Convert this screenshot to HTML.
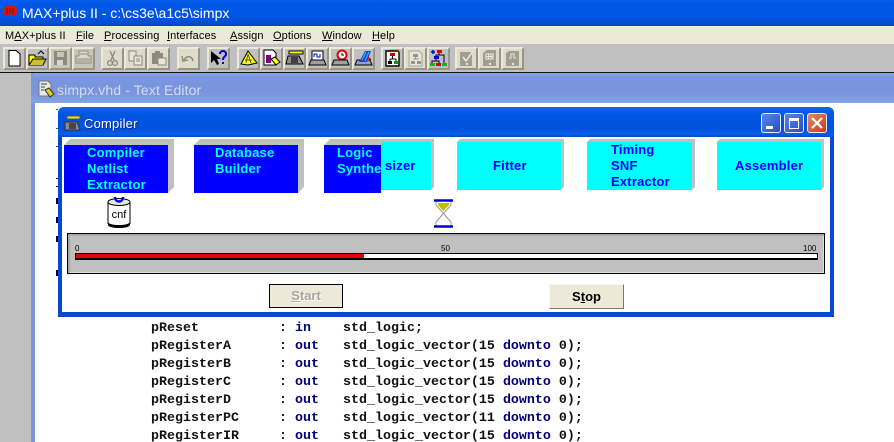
<!DOCTYPE html>
<html><head><meta charset="utf-8"><style>
html,body{margin:0;padding:0;width:894px;height:442px;overflow:hidden;background:#fff}
body{position:relative;font-family:"Liberation Sans",sans-serif}
.a{position:absolute}
.m{position:absolute;top:28px;font-size:11px;line-height:16px;color:#000;white-space:nowrap;letter-spacing:.1px}
.tb{position:absolute;top:47px;width:23px;height:23px;box-sizing:border-box;background:#c0c0c0;border:2px solid;border-color:#ece9d8 #97958a #97958a #ece9d8}
.tb.d{background:#dedbca}
.tb svg{position:absolute;left:0;top:0;width:19px;height:19px}
.code{position:absolute;left:151px;margin:0;font:bold 13.33px/18px "Liberation Mono",monospace;color:#111;white-space:pre}
.code b{color:#00007f}
.l{position:absolute;font:bold 13px/16px "Liberation Sans",sans-serif;letter-spacing:.2px;white-space:nowrap}
.mk{position:absolute;left:56px;width:2px;height:2px;background:#000}
</style></head><body>
<div class="a" style="left:0;top:0;width:894px;height:26px;background:linear-gradient(#0a5ce8 0,#0058e6 12%,#0054e3 70%,#0048c8 100%)"></div>
<svg class="a" style="left:2px;top:4px" width="16" height="14" viewBox="0 0 16 14"><path d="M1 5L4 1H12L15 5V9L13 12H10L8 10L6 12H3L1 9Z" fill="#d81616"/><path d="M5 4V11M8 4V9M11 4V11" stroke="#7a0c0c"/></svg>
<div class="a" style="left:22px;top:4px;font-size:14px;line-height:18px;color:#fff;white-space:nowrap">MAX+plus II - c:\cs3e\a1c5\simpx</div>

<div class="a" style="left:0;top:26px;width:894px;height:18px;background:#ece9d8"></div>
<div class="m" style="left:5px">M<u>A</u>X+plus II</div>
<div class="m" style="left:76px"><u>F</u>ile</div>
<div class="m" style="left:104px"><u>P</u>rocessing</div>
<div class="m" style="left:167px"><u>I</u>nterfaces</div>
<div class="m" style="left:230px"><u>A</u>ssign</div>
<div class="m" style="left:273px"><u>O</u>ptions</div>
<div class="m" style="left:322px"><u>W</u>indow</div>
<div class="m" style="left:372px"><u>H</u>elp</div>

<div class="a" style="left:0;top:44px;width:894px;height:28px;background:#c0c0c0"></div>
<div class="a" style="left:0;top:72px;width:894px;height:1px;background:#111"></div>

<div class="tb" style="left:3px"><svg viewBox="0 0 19 19"><path d="M4 1.500H11L15 5V17H4Z" fill="#fff" stroke="#000"/></svg></div>
<div class="tb" style="left:26px"><svg viewBox="0 0 19 19"><path d="M1 6H7V8H15V16H1Z" fill="#ff0" stroke="#000"/><path d="M1 16L5 10H18L15 16" fill="#cfc030" stroke="#000"/><path d="M10 5L13 2L16 5" fill="none" stroke="#000"/></svg></div>
<div class="tb d" style="left:49px;background:#c8c6b8"><svg viewBox="0 0 19 19"><path d="M3 2H16V16H3Z" fill="#8c8a7c"/><rect x="6" y="3" width="7" height="5" fill="#c8c6b8"/><rect x="6" y="11" width="6" height="5" fill="#d8d6c8"/></svg></div>
<div class="tb d" style="left:72px;background:#c8c6b8"><svg viewBox="0 0 19 19"><path d="M5 2H14V7H17V14H2V7H5Z" fill="#dedbca" stroke="#8c8a7c"/><path d="M3 10H16M3 12H16M6 5H13" stroke="#8c8a7c"/></svg></div>
<div class="tb d" style="left:101px"><svg viewBox="0 0 19 19"><path d="M7 2L11 11M12 2L8 11" stroke="#8c8a7c" stroke-width="1.400"/><circle cx="7" cy="14" r="2.400" fill="none" stroke="#8c8a7c" stroke-width="1.300"/><circle cx="12" cy="14" r="2.400" fill="none" stroke="#8c8a7c" stroke-width="1.300"/></svg></div>
<div class="tb d" style="left:124px"><svg viewBox="0 0 19 19"><path d="M3 2H10V12H3Z" fill="#e8e6d8" stroke="#8c8a7c"/><path d="M8 7H16V16H8Z" fill="#e8e6d8" stroke="#8c8a7c"/><path d="M10 10H14M10 12H14" stroke="#8c8a7c"/></svg></div>
<div class="tb d" style="left:147px"><svg viewBox="0 0 19 19"><path d="M3 4H14V15H3Z" fill="#8c8a7c"/><rect x="6" y="2" width="5" height="3" fill="#8c8a7c"/><path d="M9 9H17V16H9Z" fill="#e8e6d8" stroke="#8c8a7c"/></svg></div>
<div class="tb d" style="left:177px"><svg viewBox="0 0 19 19"><path d="M5 11C8 6 13 7 14 12" fill="none" stroke="#8c8a7c" stroke-width="1.600"/><path d="M3 7L4 12L9 11" fill="none" stroke="#8c8a7c" stroke-width="1.400"/></svg></div>
<div class="tb" style="left:207px"><svg viewBox="0 0 19 19"><path d="M2 2L2 14L5 11L8 16L10 15L8 10L12 10Z" fill="#000"/><path d="M11 5C11 1 17 1 17 5C17 8 14 7 14 11M14 13V15" fill="none" stroke="#0000c0" stroke-width="2"/></svg></div>
<div class="tb" style="left:237px"><svg viewBox="0 0 19 19"><path d="M9 2L18 14L9 16L2 15Z" fill="#ff0" stroke="#000"/><path d="M9 5L7 14M9 5L12 14M6 11H13" stroke="#555" fill="none"/></svg></div>
<div class="tb" style="left:260px"><svg viewBox="0 0 19 19"><path d="M2 1H11L14 4V16H2Z" fill="#fff" stroke="#000"/><rect x="4" y="6" width="5" height="8" fill="#800080"/><path d="M9 10L13 8L18 13L14 16Z" fill="#ff0" stroke="#000"/></svg></div>
<div class="tb" style="left:283px"><svg viewBox="0 0 19 19"><path d="M4 2H18V5H4Z" fill="#ff0" stroke="#000"/><path d="M3 7H14L18 15H1Z" fill="#909090" stroke="#000"/><rect x="6" y="8" width="7" height="6" fill="#404040"/></svg></div>
<div class="tb" style="left:306px"><svg viewBox="0 0 19 19"><path d="M4 2H15V11H4Z" fill="#fff" stroke="#000"/><path d="M6 8V5H9V8H12V5" fill="none" stroke="#0000e0"/><path d="M3 11H16L18 16H1Z" fill="#a0a0a0" stroke="#000"/></svg></div>
<div class="tb" style="left:329px"><svg viewBox="0 0 19 19"><circle cx="11" cy="6" r="4.500" fill="#fff" stroke="#e00000" stroke-width="2"/><path d="M11 4V6H13" stroke="#000" fill="none"/><path d="M3 11H16L18 16H1Z" fill="#a0a0a0" stroke="#000"/></svg></div>
<div class="tb" style="left:352px"><svg viewBox="0 0 19 19"><path d="M3 11H16L18 16H1Z" fill="#a0a0a0" stroke="#000"/><path d="M5 13L11 2H17L13 13Z" fill="#2040e0"/><path d="M8 11L12 3M11 12L15 3" stroke="#20d0e0"/><path d="M14 8L17 11" stroke="#e00000" stroke-width="1.500"/></svg></div>
<div class="tb" style="left:381px"><svg viewBox="0 0 19 19"><path d="M3 2H16V17H3Z" fill="#fff" stroke="#000" stroke-width="1.400"/><path d="M7 0.500H15L17 3" fill="none" stroke="#c8b820"/><rect x="7" y="4" width="5" height="3" fill="#c00000"/><rect x="5" y="12" width="4" height="3" fill="#000"/><rect x="11" y="12" width="4" height="3" fill="#00a000"/><path d="M7 10H13M7 10V12M13 10V12M9.500 7V10" stroke="#000"/></svg></div>
<div class="tb d" style="left:404px"><svg viewBox="0 0 19 19"><path d="M3 2H13L16 5V17H3Z" fill="#e8e6d8" stroke="#a8a698"/><rect x="7" y="5" width="5" height="3" fill="#989688"/><rect x="5" y="12" width="4" height="3" fill="#989688"/><rect x="11" y="12" width="4" height="3" fill="#989688"/><path d="M7 10H13M9.500 8V10" stroke="#989688"/></svg></div>
<div class="tb" style="left:427px"><svg viewBox="0 0 19 19"><path d="M2 3H6M4 1V5" stroke="#0000e0" stroke-width="1.500"/><rect x="8" y="1" width="5" height="3" fill="#e00000"/><rect x="5" y="7" width="5" height="3" fill="#0000c0"/><rect x="1" y="14" width="5" height="3" fill="#00c000"/><rect x="7" y="14" width="5" height="3" fill="#e00000"/><rect x="13" y="14" width="5" height="3" fill="#00c000"/><path d="M10 4V6H7V7M10 6H15V14M3 14V12H10V14M7 10V12" stroke="#000" fill="none"/></svg></div>
<div class="tb d" style="left:455px"><svg viewBox="0 0 19 19"><path d="M3 3H15V17H3Z" fill="#a09e90"/><path d="M6 8L9 12L16 2" fill="none" stroke="#ece9d8" stroke-width="1.500"/><rect x="9" y="14" width="2" height="2" fill="#ece9d8"/></svg></div>
<div class="tb d" style="left:478px"><svg viewBox="0 0 19 19"><path d="M3 4L7 1H16V17H3Z" fill="#a09e90"/><path d="M6 5H13V10H6ZM6 7.500H13M8.500 5V10M11 5V10" stroke="#ece9d8" fill="none"/><rect x="9" y="14" width="2" height="2" fill="#ece9d8"/></svg></div>
<div class="tb d" style="left:501px"><svg viewBox="0 0 19 19"><path d="M3 4L6 2H16V17H3Z" fill="#a09e90"/><path d="M6 9H8V5H11V9H13" stroke="#ece9d8" fill="none"/><rect x="9" y="14" width="2" height="2" fill="#ece9d8"/></svg></div>

<div class="a" style="left:0;top:73px;width:31px;height:369px;background:#c0c0c0"></div>
<div class="a" style="left:31px;top:73px;width:4px;height:369px;background:#7b96df"></div>
<div class="a" style="left:31px;top:73px;width:863px;height:30px;border-radius:5px 0 0 0;background:linear-gradient(#8aa5e6 0,#7a96df 15%,#7a94dd 65%,#84a3e8 100%)"></div>
<svg class="a" style="left:37px;top:80px" width="18" height="18" viewBox="0 0 18 18"><path d="M2 1H11L14 4V16H2Z" fill="#e8e8e8" stroke="#777"/><path d="M4 4H10M4 7H8M4 10H7" stroke="#444"/><path d="M8 10L12 8L17 14L13 17Z" fill="#d8d020" stroke="#333"/></svg>
<div class="a" style="left:57px;top:81px;font-size:14px;line-height:18px;color:#d4dcf2;white-space:nowrap;letter-spacing:.13px">simpx.vhd - Text Editor</div>

<i class="mk" style="top:109px;background:#0a7a2a;width:2px;height:1px"></i>
<i class="mk" style="top:128px;background:#0a7a2a;height:1px"></i>
<i class="mk" style="top:146px;background:#0a7a2a;height:1px"></i>
<i class="mk" style="top:178px;height:1px"></i>
<i class="mk" style="top:186px;height:1px"></i>
<i class="mk" style="top:198px;height:6px;background:#000060"></i>
<i class="mk" style="top:217px;height:6px;background:#000060"></i>
<i class="mk" style="top:236px;height:6px;background:#000060"></i>
<i class="mk" style="top:270px;height:6px;background:#000060"></i>

<div class="a" style="left:58px;top:107px;width:776px;height:210px;background:#0648d0;border-radius:6px 6px 0 0"></div>
<div class="a" style="left:58px;top:107px;width:776px;height:30px;border-radius:6px 6px 0 0;background:linear-gradient(#0a6af0 0,#0460e6 10%,#0054e0 30%,#0052dc 75%,#0a60e8 90%,#0048c8 100%)"></div>
<div class="a" style="left:62px;top:137px;width:768px;height:175px;background:#fff"></div>
<svg class="a" style="left:64px;top:114px" width="17" height="18" viewBox="0 0 17 18"><path d="M3 2H16V5H3Z" fill="#f0e020" stroke="#555"/><path d="M1 8H13L16 16H1Z" fill="#8a8a8a" stroke="#333"/><rect x="5" y="9" width="7" height="6" fill="#444"/></svg>
<div class="a" style="left:84px;top:115px;font-size:13px;line-height:18px;letter-spacing:.2px;color:#fff;text-shadow:1px 1px 0 #0a2a88;white-space:nowrap">Compiler</div>

<div class="a" style="left:761px;top:113px;width:18px;height:18px;border:1px solid #e6ecfa;border-radius:3px;background:linear-gradient(135deg,#5a84ec,#2450c8)"><div class="a" style="left:4px;top:12px;width:7px;height:3px;background:#fff"></div></div>
<div class="a" style="left:784px;top:113px;width:18px;height:18px;border:1px solid #e6ecfa;border-radius:3px;background:linear-gradient(135deg,#5a84ec,#2450c8)"><div class="a" style="left:4px;top:4px;width:8px;height:7px;border:1px solid #fff;border-top-width:3px"></div></div>
<div class="a" style="left:807px;top:113px;width:18px;height:18px;border:1px solid #e6ecfa;border-radius:3px;background:linear-gradient(135deg,#e88868,#c83a14)"><svg class="a" style="left:0;top:0" width="18" height="18"><path d="M4 4L14 14M14 4L4 14" stroke="#fff" stroke-width="2.200"/></svg></div>

<svg class="a" style="left:0;top:0" width="894" height="442">
<polygon points="64,145 70,139 174,139 174,187 168,193" fill="#c0c0c0"/><rect x="64" y="145" width="104" height="48" fill="#0000ff"/>
<polygon points="194,145 200,139 304,139 304,187 298,193" fill="#c0c0c0"/><rect x="194" y="145" width="104" height="48" fill="#0000ff"/>
<polygon points="324,145 330,139 434,139 434,187 431,190 381,190 381,193 324,193" fill="#c0c0c0"/><rect x="381" y="142" width="50" height="48" fill="#00ffff"/><rect x="324" y="145" width="57" height="48" fill="#0000ff"/>
<polygon points="457,142 460,139 564,139 564,187 561,190" fill="#c0c0c0"/><rect x="457" y="142" width="104" height="48" fill="#00ffff"/>
<polygon points="587,142 590,139 695,139 695,187 692,190" fill="#c0c0c0"/><rect x="587" y="142" width="105" height="48" fill="#00ffff"/>
<polygon points="717,142 720,139 824,139 824,187 821,190" fill="#c0c0c0"/><rect x="717" y="142" width="104" height="48" fill="#00ffff"/>
</svg>

<div class="l" style="left:87px;top:145px;color:#00ffff">Compiler<br>Netlist<br>Extractor</div>
<div class="l" style="left:215px;top:145px;color:#00ffff">Database<br>Builder</div>
<div class="l" style="left:337px;top:145px;color:#00ffff;width:44px;overflow:hidden">Logic<br>Synthe</div>
<div class="l" style="left:385px;top:158px;color:#0000ff">sizer</div>
<div class="l" style="left:493px;top:158px;color:#0000ff">Fitter</div>
<div class="l" style="left:611px;top:142px;color:#0000ff">Timing<br>SNF<br>Extractor</div>
<div class="l" style="left:735px;top:158px;color:#0000ff">Assembler</div>

<svg class="a" style="left:105px;top:195px" width="28" height="34" viewBox="0 0 28 34">
<path d="M3 7V28C3 32 25 32 25 28V7" fill="#fff" stroke="#000"/>
<ellipse cx="14" cy="7" rx="11" ry="3.500" fill="#e8e8e8" stroke="#000"/>
<path d="M3 27C4 31 24 31 25 27V30C24 34 4 34 3 30Z" fill="#000"/>
<path d="M10 2C10 8 18 8 18 2" fill="none" stroke="#0000e0" stroke-width="2.400"/>
<text x="14" y="23" font-family="Liberation Sans,sans-serif" font-size="11" text-anchor="middle" fill="#000">cnf</text>
</svg>
<svg class="a" style="left:433px;top:199px" width="21" height="30" viewBox="0 0 21 30">
<path d="M3 2H18V6L11 14V15L18 23V27H3V23L10 15V14L3 6Z" fill="#fff" stroke="#999"/>
<path d="M5 4H16V6L10.500 12L5 6Z" fill="#c0c000"/>
<path d="M1 1.500H20M1 27.500H20" stroke="#0000d8" stroke-width="2.400"/>
</svg>

<div class="a" style="left:67px;top:233px;width:756px;height:39px;border:1px solid #000;background:#c0c0c0;box-shadow:inset 2px 2px 0 #a8a8a8,inset -1px -1px 0 #e0e0e0"></div>
<div class="a" style="left:75px;top:244px;font-size:8px;line-height:9px;color:#000">0</div>
<div class="a" style="left:441px;top:244px;font-size:8px;line-height:9px;color:#000">50</div>
<div class="a" style="left:803px;top:244px;font-size:8px;line-height:9px;color:#000">100</div>
<div class="a" style="left:75px;top:253px;width:741px;height:4px;border:1px solid #000;border-bottom-width:2px;background:#fff"></div>
<div class="a" style="left:76px;top:254px;width:288px;height:4px;background:#e80000"></div>

<div class="a" style="left:269px;top:284px;width:72px;height:22px;border:1px solid #000;background:#ece9d8;text-align:center;font:bold 13px/22px 'Liberation Sans',sans-serif;color:#a8a698;text-shadow:1px 1px 0 #fff"><u>S</u>tart</div>
<div class="a" style="left:549px;top:284px;width:73px;height:23px;border-right:1px solid #777;border-bottom:1px solid #777;border-top:1px solid #f8f7f0;border-left:1px solid #f8f7f0;background:#ece9d8;text-align:center;font:bold 13px/23px 'Liberation Sans',sans-serif;color:#000">S<u>t</u>op</div>

<pre class="code" style="top:320px">pReset          : <b>in</b>    std_logic;
pRegisterA      : <b>out</b>   std_logic_vector(15 <b>downto</b> 0);
pRegisterB      : <b>out</b>   std_logic_vector(15 <b>downto</b> 0);
pRegisterC      : <b>out</b>   std_logic_vector(15 <b>downto</b> 0);
pRegisterD      : <b>out</b>   std_logic_vector(15 <b>downto</b> 0);
pRegisterPC     : <b>out</b>   std_logic_vector(11 <b>downto</b> 0);
pRegisterIR     : <b>out</b>   std_logic_vector(15 <b>downto</b> 0);</pre>
</body></html>
